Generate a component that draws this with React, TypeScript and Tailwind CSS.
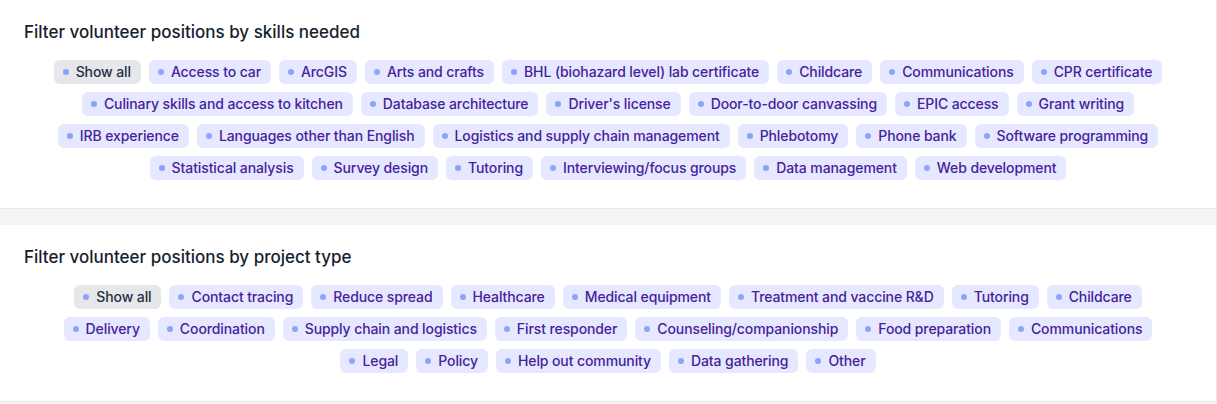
const skills = [
  "Access to car",
  "ArcGIS",
  "Arts and crafts",
  "BHL (biohazard level) lab certificate",
  "Childcare",
  "Communications",
  "CPR certificate",
  "Culinary skills and access to kitchen",
  "Database architecture",
  "Driver's license",
  "Door-to-door canvassing",
  "EPIC access",
  "Grant writing",
  "IRB experience",
  "Languages other than English",
  "Logistics and supply chain management",
  "Phlebotomy",
  "Phone bank",
  "Software programming",
  "Statistical analysis",
  "Survey design",
  "Tutoring",
  "Interviewing/focus groups",
  "Data management",
  "Web development",
];

const projectTypes = [
  "Contact tracing",
  "Reduce spread",
  "Healthcare",
  "Medical equipment",
  "Treatment and vaccine R&D",
  "Tutoring",
  "Childcare",
  "Delivery",
  "Coordination",
  "Supply chain and logistics",
  "First responder",
  "Counseling/companionship",
  "Food preparation",
  "Communications",
  "Legal",
  "Policy",
  "Help out community",
  "Data gathering",
  "Other",
];

function Badge({ label, active }: { label: string; active?: boolean }) {
  return (
    <span
      className={
        active
          ? "m-1 inline-flex items-center rounded-md bg-[#e5e7eb] px-2.5 py-0.5 text-sm leading-5 font-medium tracking-[-0.1px] text-[#252f3f]"
          : "m-1 inline-flex items-center rounded-md bg-[#e5e8ff] px-2.5 py-0.5 text-sm leading-5 font-medium tracking-[-0.1px] text-[#46229c]"
      }
    >
      <svg className="-ml-0.5 mr-1.5 h-2 w-2 text-[#8da2fb]" fill="currentColor" viewBox="0 0 8 8">
        <circle cx="4" cy="4" r="3" />
      </svg>
      {label}
    </span>
  );
}

function FilterCard({ title, items }: { title: string; items: string[] }) {
  return (
    <div className="border-b border-[#e5e7eb] bg-white px-6 pt-5 pb-6">
      <h3 className="text-[17px] leading-6 font-medium text-[#161e2e]">{title}</h3>
      <div className="mt-3 flex flex-wrap justify-center">
        <Badge label="Show all" active />
        {items.map((s) => (
          <Badge key={s} label={s} />
        ))}
      </div>
    </div>
  );
}

export default function App() {
  return (
    <div className="min-h-screen bg-[#f4f5f7] font-['Inter',sans-serif]">
      <div className="border-r border-[#e5e7eb]">
        <FilterCard title="Filter volunteer positions by skills needed" items={skills} />
        <div className="mt-4">
          <FilterCard title="Filter volunteer positions by project type" items={projectTypes} />
        </div>
      </div>
    </div>
  );
}
